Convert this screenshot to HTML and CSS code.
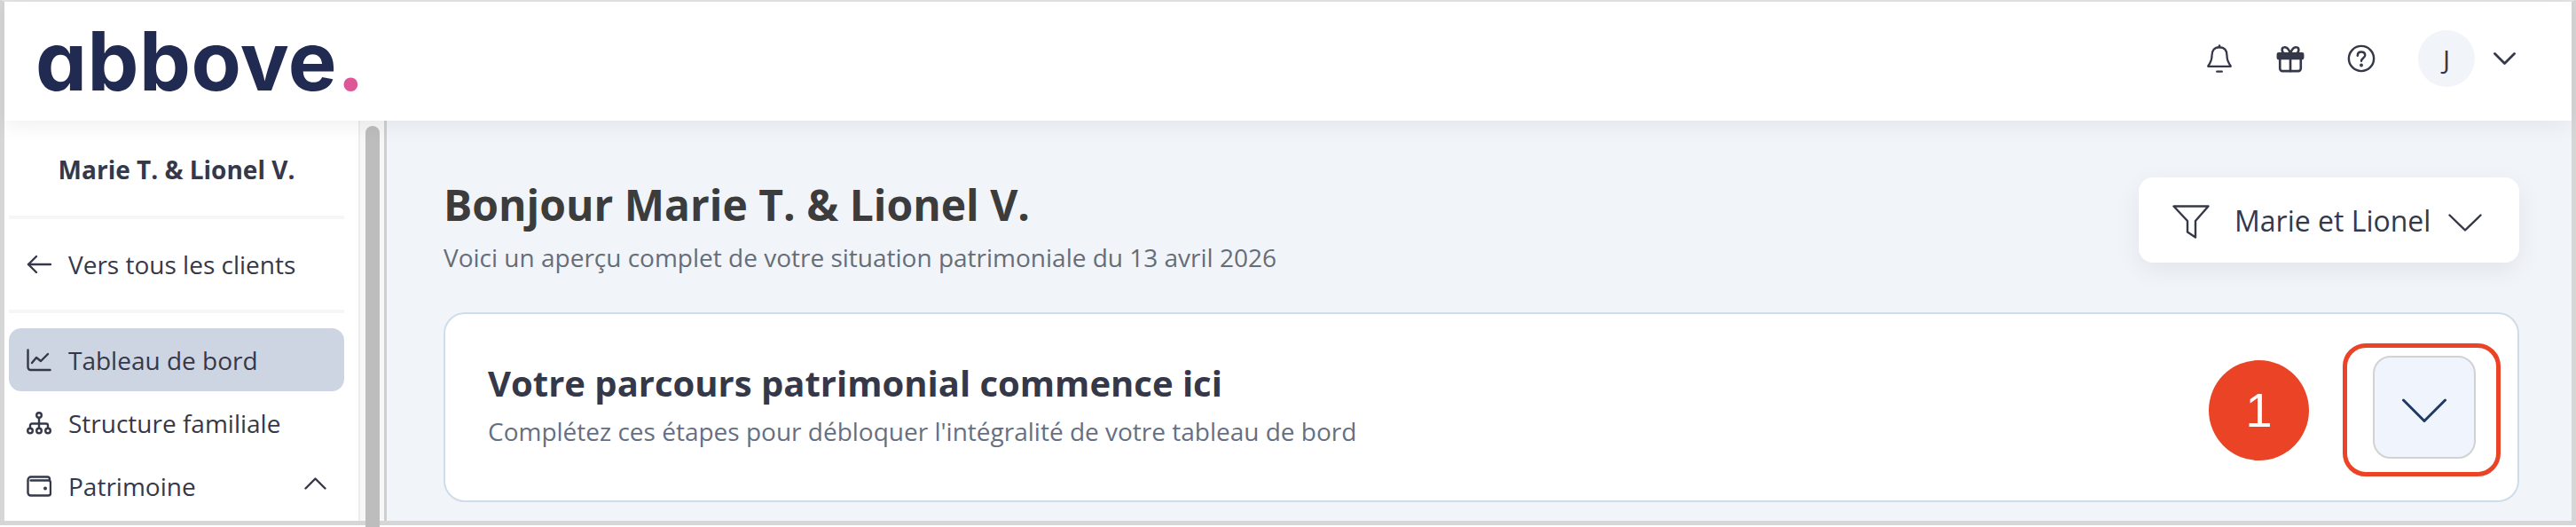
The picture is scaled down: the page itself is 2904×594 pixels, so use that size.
FILE: index.html
```html
<!DOCTYPE html>
<html lang="fr">
<head>
    <meta charset="UTF-8">
    <meta name="viewport" content="width=device-width, initial-scale=1.0">
    <title>abbove - Tableau de bord</title>
    <link rel="stylesheet" href="styles.css">
</head>
<body>
    <div class="frame">
        <!-- Top bar -->
        <header class="topbar">
            <div class="logo">abbove<span class="logo-dot">.</span></div>
            <div class="top-actions">
                <svg class="top-icon" viewBox="0 0 32 36" fill="none" stroke="#353849" stroke-width="2.400" stroke-linecap="round" stroke-linejoin="round">
                    <path d="M16 4.500c-6 0-9 4-9 10 0 6-2 9-4.500 12.500a0.500 0.500 0 0 0 0.500 0.500h26a0.500 0.500 0 0 0 0.500-0.500c-2.500-3.500-4.500-6.500-4.500-12.500 0-6-3-10-9-10z"/>
                    <path d="M16 2.500v2"/>
                    <path d="M13 33.500h6"/>
                </svg>
                <svg class="top-icon" viewBox="0 0 34 34" fill="none" stroke="#353849" stroke-width="2.800" stroke-linecap="round" stroke-linejoin="round">
                    <rect x="2" y="11" width="30" height="6" rx="1" fill="#353849"/>
                    <path d="M4.500 17v12a3 3 0 0 0 3 3h19a3 3 0 0 0 3-3V17"/>
                    <path d="M17 11v21"/>
                    <path d="M17 11c-2-6-5-8-7.500-7.500C6 4 6.500 10 10 11"/>
                    <path d="M17 11c2-6 5-8 7.500-7.500C28 4 27.500 10 24 11"/>
                </svg>
                <svg class="top-icon" viewBox="0 0 34 34" fill="none" stroke="#353849" stroke-width="2.600" stroke-linecap="round" stroke-linejoin="round">
                    <circle cx="17" cy="17" r="15"/>
                    <path d="M12.500 13.500c0-3 2-4.500 4.500-4.500s4.500 1.500 4.500 4c0 3.500-4.500 3.500-4.500 7"/>
                    <circle cx="17" cy="25" r="0.800" fill="#353849"/>
                </svg>
                <div class="avatar">J</div>
                <svg class="top-chevron" viewBox="0 0 25 14" fill="none" stroke="#353849" stroke-width="2.800" stroke-linecap="round" stroke-linejoin="round">
                    <path d="M1.500 1.500L12.500 12.500L23.500 1.500"/>
                </svg>
            </div>
        </header>

        <div class="layout">
            <!-- Sidebar -->
            <aside class="sidebar">
                <div class="client-name">Marie T. &amp; Lionel V.</div>
                <a class="nav-item back-link">
                    <svg class="nav-icon" viewBox="0 0 28 24" fill="none" stroke="#353849" stroke-width="2.400" stroke-linecap="round" stroke-linejoin="round">
                        <path d="M27 12H2"/>
                        <path d="M11 3l-9 9 9 9"/>
                    </svg>
                    Vers tous les clients
                </a>
                <nav class="nav-list">
                    <a class="nav-item active">
                        <svg class="nav-icon" viewBox="0 0 28 26" fill="none" stroke="#353849" stroke-width="2.400" stroke-linecap="round" stroke-linejoin="round">
                            <path d="M1.500 1.500V21a3 3 0 0 0 3 3h22"/>
                            <path d="M6 16l5-6 5 4 8-8"/>
                        </svg>
                        Tableau de bord
                    </a>
                    <a class="nav-item">
                        <svg class="nav-icon" viewBox="0 0 28 26" fill="none" stroke="#353849" stroke-width="2.400" stroke-linecap="round" stroke-linejoin="round">
                            <circle cx="14" cy="4" r="2.800"/>
                            <circle cx="4" cy="21.500" r="2.800"/>
                            <circle cx="14" cy="21.500" r="2.800"/>
                            <circle cx="24" cy="21.500" r="2.800"/>
                            <path d="M14 7v11.500"/>
                            <path d="M4 18.500v-3a2 2 0 0 1 2-2h16a2 2 0 0 1 2 2v3"/>
                        </svg>
                        Structure familiale
                    </a>
                    <a class="nav-item">
                        <svg class="nav-icon" viewBox="0 0 28 24" fill="none" stroke="#353849" stroke-width="2.400" stroke-linecap="round" stroke-linejoin="round">
                            <path d="M26 5V3.500A2.500 2.500 0 0 0 23.500 1.500H5A3.500 3.500 0 0 0 1.500 5v14.500a3 3 0 0 0 3 3h20a2.500 2.500 0 0 0 2.500-2.500V8a2.500 2.500 0 0 0-2.500-2.500H4.500"/>
                            <circle cx="21" cy="14.500" r="0.800" fill="#353849"/>
                        </svg>
                        Patrimoine
                        <svg class="nav-chevron" viewBox="0 0 25 14" fill="none" stroke="#353849" stroke-width="2.400" stroke-linecap="round" stroke-linejoin="round">
                            <path d="M1.500 12.500L12.500 1.500L23.500 12.500"/>
                        </svg>
                    </a>
                </nav>
            </aside>

            <div class="scrollbar"><div class="scroll-thumb"></div></div>

            <!-- Main content -->
            <main class="content">
                <div class="page-head">
                    <div>
                        <h1>Bonjour Marie T. &amp; Lionel V.</h1>
                        <p class="page-sub">Voici un aperçu complet de votre situation patrimoniale du 13 avril 2026</p>
                    </div>
                    <button class="filter-btn">
                        <svg class="filter-icon" viewBox="0 0 42 38" fill="none" stroke="#353849" stroke-width="2.400" stroke-linecap="round" stroke-linejoin="round">
                            <path d="M1.500 1.500h39L26 18v18.500l-9-6V18z"/>
                        </svg>
                        Marie et Lionel
                        <svg class="filter-chevron" viewBox="0 0 38 20" fill="none" stroke="#353849" stroke-width="2.400" stroke-linecap="round" stroke-linejoin="round">
                            <path d="M1.500 1.500L19 18.500L36.500 1.500"/>
                        </svg>
                    </button>
                </div>

                <section class="journey-card">
                    <div class="journey-text">
                        <h2>Votre parcours patrimonial commence ici</h2>
                        <p>Complétez ces étapes pour débloquer l'intégralité de votre tableau de bord</p>
                    </div>
                    <div class="step-badge">1</div>
                    <div class="highlight-box">
                        <button class="toggle-btn">
                            <svg class="toggle-icon" viewBox="0 0 50 28" fill="none" stroke="#1f3a63" stroke-width="3" stroke-linecap="round" stroke-linejoin="round">
                                <path d="M1.500 2L25 25.500L48.500 2"/>
                            </svg>
                        </button>
                    </div>
                </section>
            </main>
        </div>
    </div>
</body>
</html>
```

FILE: styles.css
```css
* {
    box-sizing: border-box;
}

html, body {
    margin: 0;
    height: 594px;
    overflow: hidden;
    background-color: #fff;
}

body {
    font-family: 'Open Sans', sans-serif;
    color: #353849;
}

.frame {
    height: 592px;
    border-top: 2px solid #e4e4e4;
    border-left: 5px solid #d6d6d6;
    border-right: 5px solid #d6d6d6;
    border-bottom: 5px solid #d6d6d6;
    display: flex;
    flex-direction: column;
}

/* Top bar */
.topbar {
    height: 134px;
    flex-shrink: 0;
    background-color: #fff;
    display: flex;
    align-items: center;
    justify-content: space-between;
    padding: 0 63px 0 35px;
    position: relative;
    z-index: 2;
    box-shadow: 0 4px 24px rgba(0, 0, 0, 0.07);
}

.logo {
    font-family: 'Inter', sans-serif;
    font-feature-settings: "cv11" 1;
    font-size: 92px;
    font-weight: 650;
    line-height: 134px;
    letter-spacing: 0.5px;
    color: #212b52;
}

.logo-dot {
    color: #dd5696;
}

.top-actions {
    display: flex;
    align-items: center;
    padding-bottom: 6px;
}

.top-icon {
    width: 32px;
    height: 34px;
    margin-right: 48px;
}

.avatar {
    width: 64px;
    height: 64px;
    border-radius: 50%;
    background-color: #f1f5f9;
    font-size: 30px;
    display: flex;
    align-items: center;
    justify-content: center;
}

.top-chevron {
    width: 25px;
    height: 14px;
    margin-left: 21px;
}

/* Sidebar */
.layout {
    flex: 1;
    display: flex;
    min-height: 0;
}

.sidebar {
    width: 399px;
    flex-shrink: 0;
    background-color: #fff;
    padding: 0 16px 0 5px;
    overflow: hidden;
}

.client-name {
    height: 111px;
    display: flex;
    align-items: center;
    justify-content: center;
    font-size: 28px;
    font-weight: 700;
    border-bottom: 4px solid #f6f6f6;
    padding-top: 2px;
}

.nav-item {
    height: 71px;
    display: flex;
    align-items: center;
    padding: 0 20px;
    font-size: 28px;
    border-radius: 14px;
}

.back-link {
    height: 106px;
    border-bottom: 4px solid #f6f6f6;
    border-radius: 0;
}

.nav-list {
    padding-top: 17px;
}

.nav-item.active {
    background-color: #cdd4e2;
}

.nav-icon {
    width: 28px;
    height: 26px;
    margin-right: 19px;
    flex-shrink: 0;
}

.nav-chevron {
    width: 25px;
    height: 14px;
    margin-left: auto;
    margin-top: -6px;
}

/* Scrollbar */
.scrollbar {
    width: 32px;
    flex-shrink: 0;
    background-color: #f7f7f7;
    border-left: 2px solid #ececec;
    border-right: 3px solid #cfcfcf;
    position: relative;
}

.scroll-thumb {
    position: absolute;
    left: 6px;
    top: 6px;
    bottom: -7px;
    width: 16px;
    background-color: #bdbdbd;
    border-radius: 8px 8px 0 0;
}

/* Main content */
.content {
    flex: 1;
    background-color: #f1f5f9;
    padding: 64px 59px 0 64px;
}

.page-head {
    display: flex;
    justify-content: space-between;
    align-items: flex-start;
}

h1 {
    margin: 1px 0 0;
    font-size: 48px;
    line-height: 60px;
    font-weight: 700;
    color: #3c3c3c;
}

.page-sub {
    margin: 11px 0 0;
    font-size: 28px;
    line-height: 36px;
    color: #666d78;
}

.filter-btn {
    width: 429px;
    height: 96px;
    border: none;
    border-radius: 16px;
    background-color: #fff;
    box-shadow: 0 8px 28px rgba(0, 0, 0, 0.07);
    display: flex;
    align-items: center;
    padding: 0 42px 0 38px;
    font-family: 'Open Sans', sans-serif;
    font-size: 32px;
    color: #353849;
}

.filter-icon {
    width: 42px;
    height: 38px;
    margin-right: 28px;
    margin-top: 3px;
}

.filter-chevron {
    width: 38px;
    height: 20px;
    margin-left: auto;
    margin-top: 5px;
}

.journey-card {
    height: 214px;
    margin-top: 44px;
    background-color: #fff;
    border: 2px solid #cfdcea;
    border-radius: 24px;
    display: flex;
    align-items: center;
    padding: 0 19px 0 48px;
}

.journey-text {
    flex: 1;
    margin-top: -7px;
}

h2 {
    margin: 0;
    font-size: 40px;
    line-height: 50px;
    font-weight: 700;
    color: #353849;
}

.journey-text p {
    margin: 10px 0 0;
    font-size: 28px;
    line-height: 38px;
    color: #666f82;
}

.step-badge {
    width: 113px;
    height: 113px;
    border-radius: 50%;
    background-color: #ea4326;
    color: #fff;
    font-family: 'Liberation Sans', sans-serif;
    font-size: 54px;
    display: flex;
    align-items: center;
    justify-content: center;
    margin: 6px 38px 0 0;
}

.highlight-box {
    width: 178px;
    height: 150px;
    margin-top: 6px;
    border: 5px solid #ea4326;
    border-radius: 26px;
    display: flex;
    align-items: center;
    justify-content: center;
    padding: 0 0 6px 6px;
}

.toggle-btn {
    width: 116px;
    height: 116px;
    border: 2px solid #d2d2d2;
    border-radius: 20px;
    background-color: #f0f4fc;
    display: flex;
    align-items: center;
    justify-content: center;
    padding: 8px 0 0;
}

.toggle-icon {
    width: 50px;
    height: 28px;
}
```
